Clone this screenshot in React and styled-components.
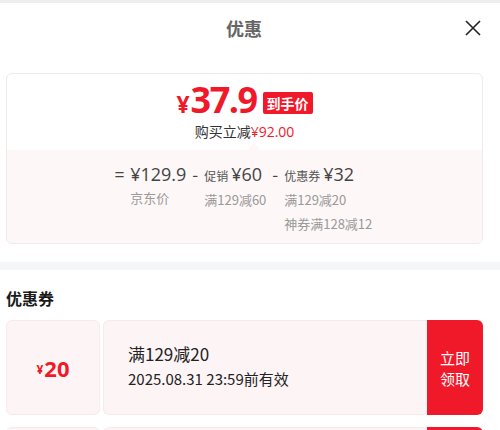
import React from 'react'
import styled, { createGlobalStyle } from 'styled-components'

const Global = createGlobalStyle`
  body {
    margin: 0;
    background: #fff;
    font-family: "Noto Sans CJK SC", "Noto Sans", sans-serif;
    color: #1a1a1a;
  }
`

const RED = '#f0192a'

const parts = [
  { label: '', amount: '¥129.9', notes: ['京东价'] },
  { label: '促销', amount: '¥60', notes: ['满129减60'] },
  { label: '优惠券', amount: '¥32', notes: ['满129减20', '神券满128减12'] }
]

export default () =>
  <Page>
    <Global />
    <TopLine />
    <Header>
      <Title>优惠</Title>
      <Close aria-label="close">
        <svg width="18" height="18" viewBox="0 0 18 18">
          <path d="M2 2 L16 16 M16 2 L2 16" stroke="#222" strokeWidth="1.6" fill="none" />
        </svg>
      </Close>
    </Header>

    <Card>
      <Upper>
        <PriceRow>
          <Yen>¥</Yen>
          <Big>37.9</Big>
          <Badge>到手价</Badge>
        </PriceRow>
        <Saving>购买立减<em>¥92.00</em></Saving>
      </Upper>
      <Lower>
        <Formula>
          <Op>=</Op>
          {parts.map((p, i) =>
            <React.Fragment key={i}>
              {i > 0 && <Op>-</Op>}
              <Term>
                <TermTop>
                  {p.label && <TermLabel>{p.label}</TermLabel>}
                  <TermAmount>{p.amount}</TermAmount>
                </TermTop>
                {p.notes.map(n => <Note key={n}>{n}</Note>)}
              </Term>
            </React.Fragment>
          )}
        </Formula>
      </Lower>
    </Card>

    <Divider />

    <SectionTitle>优惠券</SectionTitle>
    <CouponList>
      <Coupon>
        <Value><small>¥</small>20</Value>
        <Info>
          <Rule>满129减20</Rule>
          <Expiry>2025.08.31 23:59前有效</Expiry>
        </Info>
        <Take>立即<br />领取</Take>
      </Coupon>
      <Coupon>
        <Value><small>¥</small>12</Value>
        <Info>
          <Rule>满128减12</Rule>
          <Expiry>2025.08.31 23:59前有效</Expiry>
        </Info>
        <Take>立即<br />领取</Take>
      </Coupon>
    </CouponList>
  </Page>

const Page = styled.div`
  width: 500px;
  height: 430px;
  overflow: hidden;
  background: #fff;
`

const TopLine = styled.div`
  height: 3px;
  background: #eeeeee;
`

const Header = styled.div`
  position: relative;
  height: 50px;
  padding-right: 12px;
  display: flex;
  align-items: center;
  justify-content: center;
`

const Title = styled.div`
  font-size: 18px;
  font-weight: 700;
  color: #666;
`

const Close = styled.div`
  position: absolute;
  right: 18px;
  top: 16px;
  display: flex;
`

const Card = styled.div`
  margin: 20px 17px 0 6px;
  border: 1px solid #ececec;
  border-radius: 6px;
  overflow: hidden;
`

const Upper = styled.div`
  display: flex;
  flex-direction: column;
  align-items: center;
  padding: 8px 0 8px;
`

const PriceRow = styled.div`
  display: flex;
  align-items: baseline;
  color: ${RED};
  font-weight: 700;
  font-family: "Open Sans", "Noto Sans", sans-serif;
  line-height: 1;
`

const Yen = styled.span`
  font-size: 23px;
  margin-right: 1px;
`

const Big = styled.span`
  font-size: 36px;
  letter-spacing: -1.5px;
`

const Badge = styled.span`
  align-self: center;
  margin-left: 6px;
  margin-top: 5px;
  background: ${RED};
  color: #fff;
  font-family: "Noto Sans CJK SC", sans-serif;
  font-size: 14px;
  font-weight: 700;
  padding: 2px 4px;
  border-radius: 2px;
  line-height: 18px;
`

const Saving = styled.div`
  margin-top: 3px;
  font-size: 14px;
  color: #333;
  line-height: 20px;

  em {
    font-style: normal;
    color: ${RED};
    font-family: "Open Sans", "Noto Sans", sans-serif;
  }
`

const Lower = styled.div`
  position: relative;
  background: #fdf7f7;
  padding: 12px 0 7px;
  display: flex;
  justify-content: center;

  &::before {
    content: '';
    position: absolute;
    top: -5px;
    left: 243px;
    width: 8px;
    height: 8px;
    background: #fdf7f7;
    transform: rotate(45deg);
  }
`

const Formula = styled.div`
  display: flex;
  align-items: flex-start;
  gap: 4px;
  margin-left: -4px;
`

const Op = styled.span`
  font-size: 17px;
  color: #444;
  line-height: 24px;
  padding: 0 2px;
`

const Term = styled.div`
  display: flex;
  flex-direction: column;
`

const TermTop = styled.div`
  display: flex;
  align-items: baseline;
  gap: 3px;
  line-height: 24px;
`

const TermLabel = styled.span`
  font-size: 12px;
  color: #555;
`

const TermAmount = styled.span`
  font-size: 18px;
  color: #444;
  font-family: "Open Sans", "Noto Sans", sans-serif;
`

const Note = styled.span`
  font-size: 13px;
  color: #999;
  line-height: 24px;
`

const Divider = styled.div`
  height: 8px;
  margin-top: 18px;
  background: #f5f6f8;
`

const SectionTitle = styled.div`
  padding: 16px 6px 10px;
  font-size: 16px;
  font-weight: 700;
  color: #1a1a1a;
`

const CouponList = styled.div`
  display: flex;
  flex-direction: column;
  gap: 12px;
  padding: 0 17px 0 6px;
`

const Coupon = styled.div`
  display: flex;
  height: 95px;
  gap: 3px;
`

const Value = styled.div`
  width: 94px;
  background: #fdf4f5;
  border: 1px solid #f7eaea;
  border-radius: 6px;
  box-sizing: border-box;
  display: flex;
  align-items: center;
  justify-content: center;
  color: ${RED};
  font-size: 22px;
  font-weight: 700;
  font-family: "Open Sans", "Noto Sans", sans-serif;

  small {
    font-size: 12px;
    margin-right: 1px;
    margin-top: 4px;
  }
`

const Info = styled.div`
  flex: 1;
  background: #fdf4f5;
  border: 1px solid #f7eaea;
  border-right: none;
  border-radius: 6px 0 0 6px;
  display: flex;
  flex-direction: column;
  justify-content: center;
  padding-left: 24px;
  color: #222;
`

const Rule = styled.div`
  font-size: 17px;
  line-height: 26px;
  margin-top: -4px;
`

const Expiry = styled.div`
  font-size: 15px;
  line-height: 24px;
`

const Take = styled.div`
  width: 56px;
  background: ${RED};
  color: #fff;
  border-radius: 0 6px 6px 0;
  display: flex;
  align-items: center;
  justify-content: center;
  text-align: center;
  font-size: 15px;
  line-height: 21px;
  margin-left: -3px;
`
